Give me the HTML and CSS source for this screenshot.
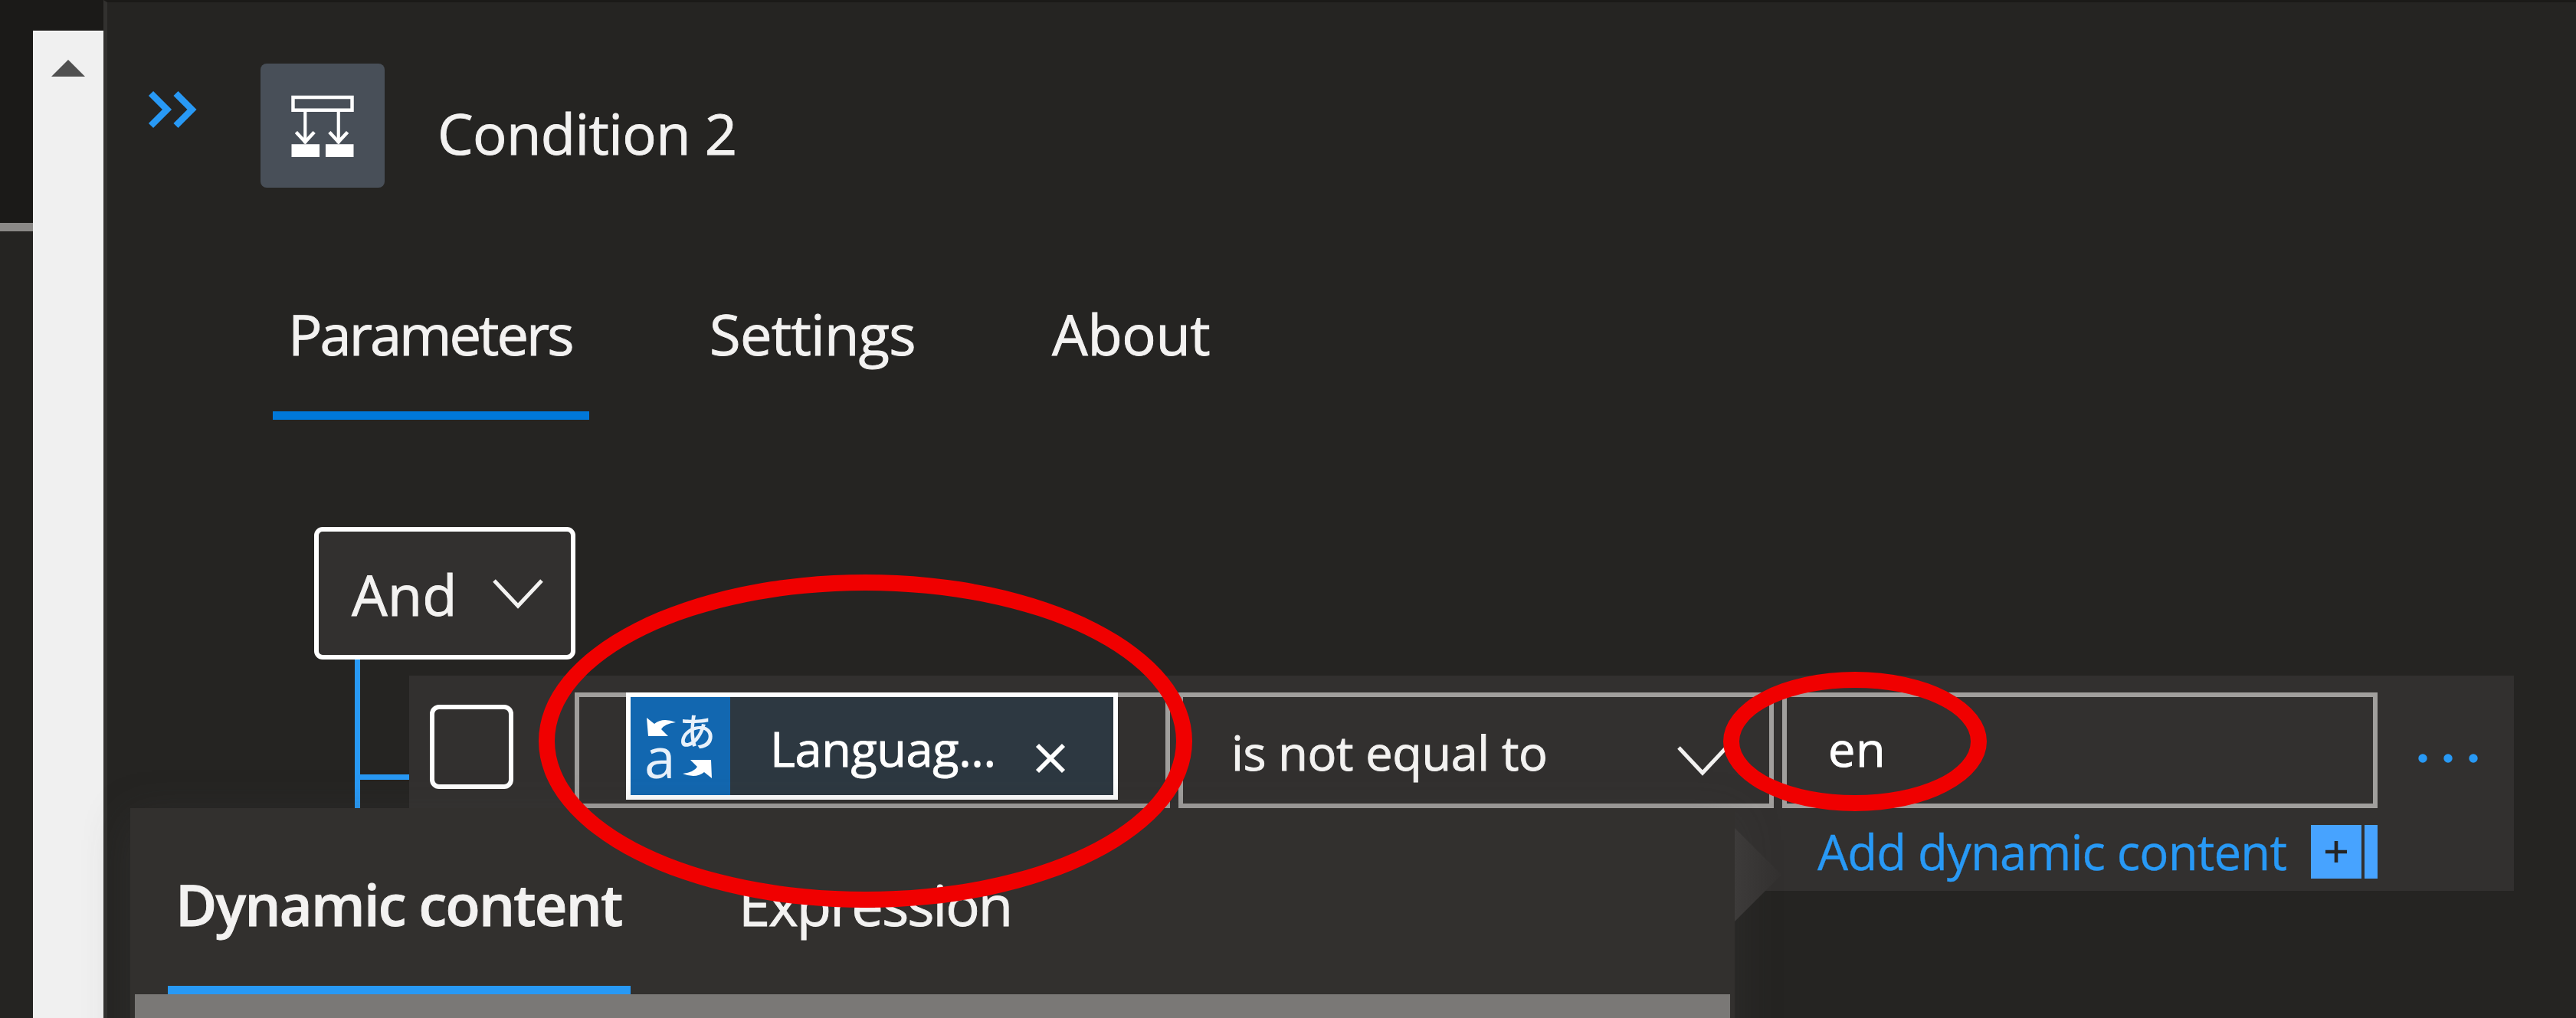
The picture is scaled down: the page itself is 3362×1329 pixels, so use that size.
FILE: index.html
```html
<!DOCTYPE html>
<html lang="en">
<head>
<meta charset="utf-8">
<title>Condition 2</title>
<link rel="stylesheet" href="styles.css">
</head>
<body>
<div class="app">
  <div class="canvas-edge"><div class="canvas-header"></div></div>
  <div class="scrollbar">
    <div class="scroll-track">
      <svg class="scroll-arrow" viewBox="0 0 44 22"><path d="M22 0 44 22H0Z" fill="#505050"/></svg>
    </div>
  </div>
  <main class="panel">
    <header class="panel-header">
      <svg class="collapse" viewBox="0 0 64 50" fill="none" stroke="#2899f5" stroke-width="8.6"><path d="M3 4 24 25 3 46M35.500 4 56.500 25 35.500 46"/></svg>
      <div class="condition-icon">
        <svg viewBox="0 0 82 82" fill="none" stroke="#fff" stroke-width="4.500">
          <path d="M2 3H80V20H2Z"/>
          <path stroke-width="4.200" d="M18 21V64M62 21V64"/>
          <path d="M6 49 18 62 30 49M50 49 62 62 74 49"/>
          <path fill="#fff" stroke="none" d="M0 65H37V82H0ZM45 65H82V82H45Z"/>
        </svg>
      </div>
      <h1 class="title">Condition 2</h1>
    </header>
    <nav class="tabs">
      <div class="tab active"><span class="tab-parameters">Parameters</span></div>
      <div class="tab settings">Settings</div>
      <div class="tab about">About</div>
    </nav>
    <section class="builder">
      <div class="group-operator">
        <span>And</span>
        <svg class="chevron" viewBox="0 0 66 40"><path d="M2 3 33 36 64 3" fill="none" stroke="#f3f2f1" stroke-width="5"/></svg>
      </div>
      <div class="group-body">
        <div class="connector"><div class="branch"></div></div>
        <div class="row">
          <div class="checkbox"></div>
          <div class="fields">
            <div class="field operand">
              <div class="token">
                <div class="token-icon">
                  <svg viewBox="0 0 130 128">
                    <path fill="#fff" d="M21 27 31 35Q42 26 59 33Q44 35 40 42L49 51H23Z"/>
                    <path fill="#fff" d="M106 106 96 98Q85 107 68 100Q83 98 87 91L78 82H105Z"/>
                    <text x="18" y="106" class="glyph-latin">a</text>
                    <text x="61" y="64" class="glyph-kana">あ</text>
                  </svg>
                </div>
                <span class="token-label">Languag...</span>
                <svg class="token-close" viewBox="0 0 38 38"><path d="M2 2 36 36M36 2 2 36" stroke="#fff" stroke-width="5.800"/></svg>
              </div>
            </div>
            <div class="field comparison">
              <span>is not equal to</span>
              <svg class="chevron" viewBox="0 0 66 40"><path d="M2 3 33 36 64 3" fill="none" stroke="#f3f2f1" stroke-width="5"/></svg>
            </div>
            <div class="field value"><span>en</span></div>
            <div class="add-dynamic">
              <span>Add dynamic content</span>
              <div class="plus"><svg viewBox="0 0 28 28"><path d="M14 0V28M0 14H28" stroke="#252423" stroke-width="4.600"/></svg></div>
              <div class="plus-edge"></div>
            </div>
          </div>
          <svg class="more" viewBox="0 0 78 12" fill="#2899f5"><circle cx="6" cy="6" r="5.700"/><circle cx="39" cy="6" r="5.700"/><circle cx="72" cy="6" r="5.700"/></svg>
        </div>
      </div>
    </section>
  </main>

  <aside class="picker">
    <svg class="beak" viewBox="0 0 61 122">
      <defs><linearGradient id="beakFill"><stop offset="0" stop-color="#3d3b3a"/><stop offset="1" stop-color="#32302f"/></linearGradient></defs>
      <path d="M0 0 61 61 0 122Z" fill="url(#beakFill)"/>
    </svg>
    <div class="picker-tabs">
      <div class="picker-tab selected"><span>Dynamic content</span></div>
      <div class="picker-tab expression">Expression</div>
    </div>
    <div class="picker-list"></div>
  </aside>

  <div class="mark mark-token"></div>
  <div class="mark mark-value"></div>
</div>
</body>
</html>
```
FILE: styles.css
```css
* { box-sizing: border-box; }

body {
  margin: 0;
  background: #252422;
  color: #f3f2f1;
  font-family: "Open Sans", "Noto Sans", sans-serif;
  font-size: 74px;
  line-height: 100px;
  -webkit-text-stroke: 0.9px currentColor;
}

svg { display: block; flex: none; overflow: visible; }

.app {
  position: relative;
  display: flex;
  height: 1329px;
  overflow: hidden;
}

.canvas-edge { width: 43px; background: #252422; }
.canvas-header {
  height: 302px;
  background: #1b1a18;
  border-bottom: 11px solid #8b8987;
}

.scrollbar { width: 92px; padding-top: 40px; background: #1b1a18; }
.scroll-track {
  height: 1289px;
  padding: 37px 0 0 24px;
  background: #f0f0f0;
  border-top: 1px solid #fff;
}
.scroll-arrow { width: 44px; height: 22px; }

.panel {
  flex: 1;
  border-top: 3px solid #1b1a18;
  border-left: 5px solid #32312f;
  background: #252422;
}

.panel-header {
  display: flex;
  align-items: flex-start;
  height: 382px;
  padding: 80px 0 0 54px;
}
.collapse { width: 64px; height: 50px; margin-top: 35px; }
.condition-icon {
  width: 162px;
  height: 162px;
  margin-left: 82px;
  padding: 41px 40px 40px;
  border-radius: 8px;
  background: #484f58;
}
.condition-icon svg { width: 82px; height: 81px; }
.title {
  margin: 41px 0 0 69px;
  font-size: 74px;
  font-weight: 400;
  letter-spacing: -0.6px;
}

.tabs { display: flex; height: 163px; padding-top: 1px; margin-left: 216px; }
.tab.active {
  width: 413px;
  padding-left: 20px;
  border-bottom: 11px solid #0078d9;
}
.tab-parameters { letter-spacing: -3px; }
.tab.settings { width: 444px; padding-left: 157px; letter-spacing: -0.7px; }
.tab.about { padding-left: 160px; letter-spacing: -0.4px; }

.builder { padding: 140px 0 0 270px; }
.group-operator {
  display: flex;
  align-items: center;
  width: 341px;
  height: 173px;
  padding: 2px 0 0 43px;
  border: 6px solid #fff;
  border-radius: 11px;
  background: #32302f;
}
.chevron { width: 66px; height: 40px; }
.group-operator .chevron { margin: -2px 0 0 47px; }

.group-body { display: flex; }
.connector {
  width: 71px;
  height: 302px;
  margin-left: 53px;
  border-left: 7px solid #2899f5;
  padding-top: 150px;
}
.branch { height: 7px; background: #2899f5; }

.row {
  display: flex;
  align-items: flex-start;
  width: 2747px;
  height: 281px;
  margin-top: 21px;
  padding: 22px 0 0 27px;
  background: #32302f;
}
.checkbox {
  width: 109px;
  height: 110px;
  margin: 16px 80px 0 0;
  border: 6px solid #fff;
  border-radius: 12px;
}
.fields {
  display: grid;
  grid-template-columns: repeat(3, 777px);
  grid-template-rows: 151px auto;
  column-gap: 11px;
  font-size: 63px;
}
.field { display: flex; border: 6px solid #a19f9d; }
.operand { padding-left: 61px; }
.token {
  display: flex;
  width: 642px;
  height: 140px;
  margin-top: -6px;
  border: 6px solid #fff;
  background: #2d3841;
  color: #fff;
}
.token-icon { width: 130px; background: #1267b0; }
.token-icon svg { width: 130px; height: 128px; }
.glyph-latin { font: 73px "Open Sans", sans-serif; fill: #e8f1fa; -webkit-text-stroke: 0; }
.glyph-kana { font: 500 50px "Noto Sans CJK JP", sans-serif; fill: #e8f1fa; -webkit-text-stroke: 0; }
.token-label { width: 286px; margin: 17px 0 0 52px; letter-spacing: -0.35px; white-space: nowrap; }
.token-close { width: 38px; height: 38px; margin: 61px 0 0 61px; }

.comparison { padding: 22px 54px 0 63px; justify-content: space-between; letter-spacing: -0.35px; }
.comparison .chevron { margin-top: 41px; }
.value { padding: 17px 0 0 54px; color: #fff; letter-spacing: 0.5px; }

.add-dynamic {
  grid-column: 3;
  display: flex;
  padding: 22px 0 0 46px;
  color: #2899f5;
  font-size: 63.5px;
  letter-spacing: -0.85px;
  white-space: nowrap;
  -webkit-text-stroke-width: 0.4px;
}
.add-dynamic span { width: 645px; margin-top: -28px; line-height: 126px; }
.plus {
  display: flex;
  align-items: center;
  justify-content: center;
  width: 66px;
  height: 70px;
  background: #47a3ff;
}
.plus svg { width: 28px; height: 28px; }
.plus-edge { width: 17px; height: 70px; margin-left: 4px; background: #47a3ff; }
.more { width: 78px; height: 12px; margin: 80px 0 0 53px; }

/* Dynamic content picker floats over the builder */
.picker {
  position: absolute;
  left: 170px;
  top: 1055px;
  width: 2094px;
  height: 400px;
  background: #32302e;
  box-shadow: 0 14px 56px rgba(70, 70, 68, 0.3);
}
.beak { position: absolute; left: 2094px; top: 26px; width: 61px; height: 122px; }
.picker-tabs { display: flex; height: 243px; padding-left: 49px; }
.picker-tab { padding-top: 76px; }
.picker-tab.selected {
  width: 604px;
  padding-left: 10px;
  border-bottom: 11px solid #2899f5;
  font-weight: 600;
  letter-spacing: -1.7px;
  white-space: nowrap;
}
.picker-tab.expression { padding-left: 141px; letter-spacing: -2px; }
.picker-list { height: 157px; margin: 0 6px; background: #7a7876; }

/* Red highlight rings over the page */
.mark { position: absolute; border: 21px solid #f00000; border-radius: 50%; }
.mark-token { left: 703px; top: 750px; width: 853px; height: 435px; }
.mark-value { left: 2249px; top: 877px; width: 344px; height: 182px; }
```
